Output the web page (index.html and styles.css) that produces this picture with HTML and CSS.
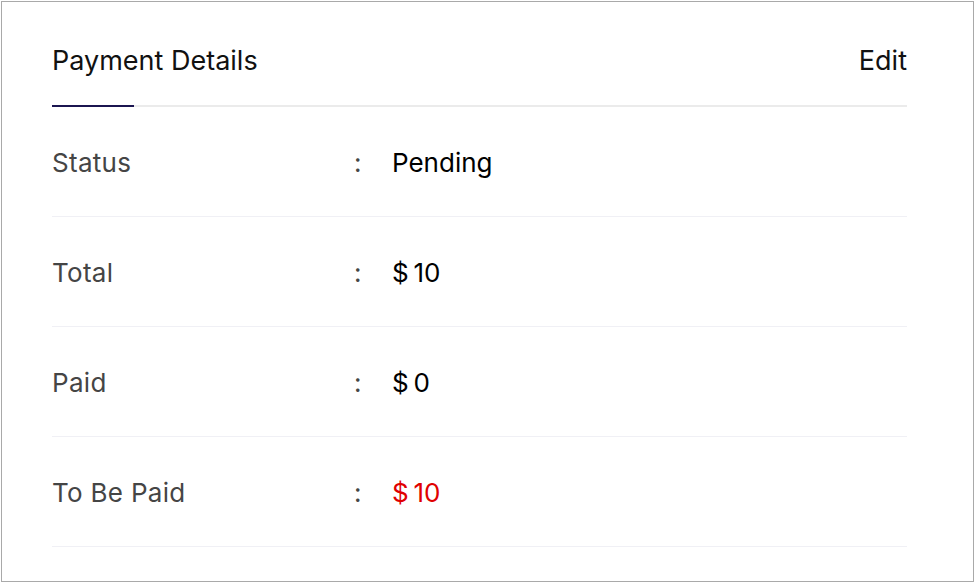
FILE: index.html
```html
<!DOCTYPE html>
<html>
<head>
<meta charset="utf-8">
<link rel="stylesheet" href="styles.css">
</head>
<body>
<div class="card">
  <div class="header">
    <div class="tab">Payment Details</div>
    <div class="edit">Edit</div>
  </div>
  <div class="row">
    <div class="label">Status</div>
    <div class="colon">:</div>
    <div class="value">Pending</div>
  </div>
  <div class="row">
    <div class="label">Total</div>
    <div class="colon">:</div>
    <div class="value">$&thinsp;10</div>
  </div>
  <div class="row">
    <div class="label">Paid</div>
    <div class="colon">:</div>
    <div class="value">$&thinsp;0</div>
  </div>
  <div class="row">
    <div class="label">To Be Paid</div>
    <div class="colon">:</div>
    <div class="value due">$&thinsp;10</div>
  </div>
</div>
</body>
</html>
```
FILE: styles.css
```css
html, body {
  margin: 0;
  padding: 0;
  background: #ffffff;
}
body {
  font-family: "Inter", "Liberation Sans", sans-serif;
}
.card {
  margin: 1px 0 0 1px;
  width: 973px;
  height: 581px;
  box-sizing: border-box;
  border: 1px solid #a9a9a9;
  padding: 0 66px 0 50px;
  background: #fff;
}
.header {
  height: 103px;
  display: flex;
  justify-content: space-between;
  align-items: flex-end;
  border-bottom: 2px solid #ebebeb;
}
.tab {
  font-size: 27px;
  line-height: 32px;
  color: #111;
  width: 82px;
  white-space: nowrap;
  padding-bottom: 28px;
  border-bottom: 2px solid #1b1550;
  margin-bottom: -2px;
}
.edit {
  font-size: 27px;
  line-height: 32px;
  color: #111;
  padding-bottom: 28px;
}
.row {
  box-sizing: border-box;
  height: 110px;
  padding-top: 3px;
  display: flex;
  align-items: center;
  border-bottom: 1px solid #f0f0f5;
  font-size: 26px;
  line-height: 32px;
}
.label {
  width: 302px;
  color: #454545;
  letter-spacing: 0.3px;
}
.colon {
  width: 38px;
  color: #454545;
}
.value {
  color: #000;
}
.due {
  color: #e00000;
}
```
